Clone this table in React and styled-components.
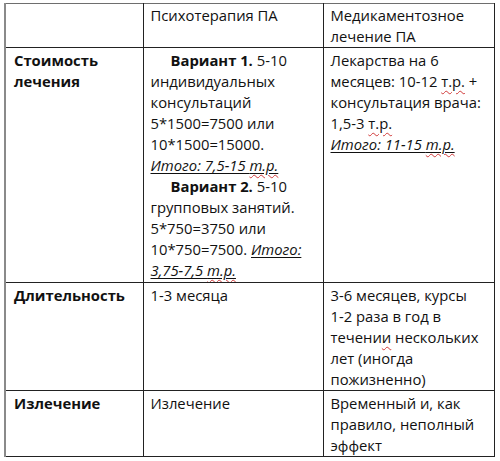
import React from 'react';
import styled, { createGlobalStyle } from 'styled-components';

const GlobalStyle = createGlobalStyle`
  html, body {
    margin: 0;
    padding: 0;
    background: #ffffff;
  }
  body {
    font-family: "Open Sans", "Liberation Sans", sans-serif;
    color: #111111;
  }
`;

const rows = [
  {
    title: 'Стоимость лечения',
    height: 235,
    psycho: [
      { indent: true, parts: [{ b: 'Вариант 1.' }, ' 5-10'] },
      { parts: ['индивидуальных'] },
      { parts: ['консультаций'] },
      { parts: ['5*1500=7500 или'] },
      { parts: ['10*1500=15000.'] },
      { parts: [{ total: 'Итого: 7,5-15 ', mark: 'т.р.' }] },
      { indent: true, parts: [{ b: 'Вариант 2.' }, ' 5-10'] },
      { parts: ['групповых занятий.'] },
      { parts: ['5*750=3750 или'] },
      { parts: ['10*750=7500. ', { total: 'Итого:' }] },
      { parts: [{ total: '3,75-7,5 ', mark: 'т.р.' }] },
    ],
    drugs: [
      { parts: ['Лекарства на 6'] },
      { parts: ['месяцев: 10-12 ', { spell: 'т.р.' }, ' +'] },
      { parts: ['консультация врача:'] },
      { parts: ['1,5-3 ', { spell: 'т.р.' }] },
      { parts: [{ total: 'Итого: 11-15 ', mark: 'т.р.' }] },
    ],
  },
  {
    title: 'Длительность',
    height: 107,
    psycho: [{ parts: ['1-3 месяца'] }],
    drugs: [
      { parts: ['3-6 месяцев, курсы'] },
      { parts: ['1-2 раза в год в'] },
      { parts: ['течени', { spell: 'и' }, ' нескольких'] },
      { parts: ['лет (иногда'] },
      { parts: ['пожизненно)'] },
    ],
  },
  {
    title: 'Излечение',
    height: 64,
    psycho: [{ parts: ['Излечение'] }],
    drugs: [
      { parts: ['Временный и, как'] },
      { parts: ['правило, неполный'] },
      { parts: ['эффект'] },
    ],
  },
];

const Page = styled.div`
  padding: 3px 0 0 4px;
`;

const Table = styled.table`
  border-collapse: collapse;
  table-layout: fixed;
  width: 489px;
  border-left: 2px solid #8a8a8a;
`;

const Col = styled.col`
  width: ${p => p.$w}px;
`;

const Row = styled.tr`
  height: ${p => p.$h}px;
`;

const Cell = styled.td`
  border: 1px solid #222222;
  vertical-align: top;
  padding: 2px 6px 0 ${p => (p.$first ? 8 : 7)}px;
  font-size: 14.8px;
  line-height: 21px;
  white-space: nowrap;
  overflow: hidden;
`;

const Head = styled.th`
  border: 1px solid #222222;
  border-top-color: #6e6e6e;
  vertical-align: top;
  text-align: left;
  font-weight: 400;
  padding: 1px 6px 0 7px;
  font-size: 14.8px;
  line-height: 21px;
  white-space: nowrap;
`;

const Title = styled.span`
  display: block;
  font-weight: 700;
  white-space: normal;
`;

const Line = styled.div`
  padding-left: ${p => (p.$indent ? 20 : 0)}px;
`;

const Bold = styled.b`
  font-weight: 700;
`;

const Total = styled.span`
  font-style: italic;
  text-decoration: underline;
  text-decoration-color: #111111;
  text-underline-offset: 2px;
`;

const Spell = styled.span`
  text-decoration: underline wavy #d03a3a;
  text-decoration-thickness: 1px;
  text-underline-offset: 3px;
`;

const Part = ({ part }) => {
  if (typeof part === 'string') return part;
  if (part.b) return <Bold>{part.b}</Bold>;
  if (part.spell) return <Spell>{part.spell}</Spell>;
  return (
    <Total>
      {part.total}
      {part.mark && <Spell>{part.mark}</Spell>}
    </Total>
  );
};

const Lines = ({ lines }) =>
  lines.map((line, i) => (
    <Line key={i} $indent={line.indent}>
      {line.parts.map((part, j) => (
        <Part key={j} part={part} />
      ))}
    </Line>
  ));

const App = () => (
  <>
    <GlobalStyle />
    <Page>
      <Table>
        <colgroup>
          <Col $w={138} />
          <Col $w={180} />
          <Col $w={171} />
        </colgroup>
        <thead>
          <Row $h={44}>
            <Head />
            <Head>Психотерапия ПА</Head>
            <Head>
              Медикаментозное
              <br />
              лечение ПА
            </Head>
          </Row>
        </thead>
        <tbody>
          {rows.map(row => (
            <Row key={row.title} $h={row.height}>
              <Cell $first>
                <Title>{row.title}</Title>
              </Cell>
              <Cell>
                <Lines lines={row.psycho} />
              </Cell>
              <Cell>
                <Lines lines={row.drugs} />
              </Cell>
            </Row>
          ))}
        </tbody>
      </Table>
    </Page>
  </>
);

export default App;
